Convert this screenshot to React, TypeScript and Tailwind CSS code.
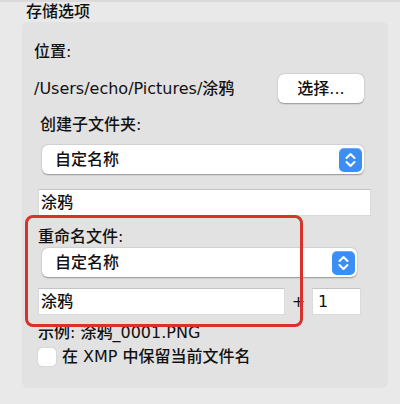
function Stepper() {
  return (
    <div className="w-[23px] h-[24px] rounded-[5px] bg-[#3b8ef3] flex items-center justify-center shadow-[inset_0_1px_0_rgba(255,255,255,0.25)]">
      <svg width="23" height="24" viewBox="0 0 23 24" fill="none">
        <path d="M7.5 10 L11.5 6 L15.5 10" stroke="white" strokeWidth="2" strokeLinecap="round" strokeLinejoin="round" />
        <path d="M7.5 14 L11.5 18 L15.5 14" stroke="white" strokeWidth="2" strokeLinecap="round" strokeLinejoin="round" />
      </svg>
    </div>
  )
}

function Select({ width }: { width: string }) {
  return (
    <div className={`${width} h-[29px] ml-[20px] bg-white rounded-[6px] flex items-center justify-between pl-[13px] pr-[2px] shadow-[0_0.5px_1.5px_rgba(0,0,0,0.35)]`}>
      <span>自定名称</span>
      <Stepper />
    </div>
  )
}

export default function App() {
  return (
    <div className="relative w-[400px] h-[404px] overflow-hidden bg-[#e9e9e9] border-t-2 border-[#dadada] text-[16px] leading-[20px] font-medium text-[#111] [font-family:'DejaVu_Sans','Noto_Sans_CJK_SC',sans-serif]">
      <div className="h-[20px] pl-[26px]">存储选项</div>

      <div className="ml-[22px] w-[366px] h-[366px] bg-[#e2e2e2] rounded-[6px] flex flex-col pt-[20px]">
        <div className="pl-[12px] h-[20px]">位置:</div>

        <div className="mt-[12px] h-[29px] flex items-center justify-between pl-[12px] pr-[24px]">
          <span>/Users/echo/Pictures/涂鸦</span>
          <button className="w-[86px] h-[29px] bg-white rounded-[6px] shadow-[0_0.5px_1.5px_rgba(0,0,0,0.35)]">选择...</button>
        </div>

        <div className="mt-[12px] pl-[18px] h-[20px]">创建子文件夹:</div>
        <div className="mt-[10px]">
          <Select width="w-[322px]" />
        </div>

        <div className="mt-[15px] ml-[16px] w-[333px] h-[27px] bg-white border border-[#dadada] border-t-[#c4c4c4] flex items-center pl-[2px]">涂鸦</div>

        <div className="mt-[11px] pl-[16px] h-[20px]">重命名文件:</div>
        <div className="mt-[1px]">
          <Select width="w-[315px]" />
        </div>

        <div className="mt-[11px] ml-[16px] flex items-center h-[27px]">
          <div className="w-[247px] h-[27px] bg-white border border-[#dadada] border-t-[#c4c4c4] flex items-center pl-[2px]">涂鸦</div>
          <div className="w-[27px] text-center">+</div>
          <div className="w-[49px] h-[27px] bg-white border border-[#dadada] border-t-[#c4c4c4] flex items-center pl-[5px]">1</div>
        </div>

        <div className="mt-[8px] pl-[16px] h-[20px]">示例: 涂鸦_0001.PNG</div>

        <div className="mt-[4px] pl-[16px] h-[20px] flex items-center gap-[6px]">
          <div className="w-[18px] h-[18px] bg-white rounded-[4px] shadow-[0_0_1px_rgba(0,0,0,0.4)]" />
          <span>在 XMP 中保留当前文件名</span>
        </div>
      </div>

      <div className="absolute left-[25px] top-[213px] w-[278px] h-[112px] border-[3px] border-[#d8322c] rounded-[8px]" />
    </div>
  )
}
